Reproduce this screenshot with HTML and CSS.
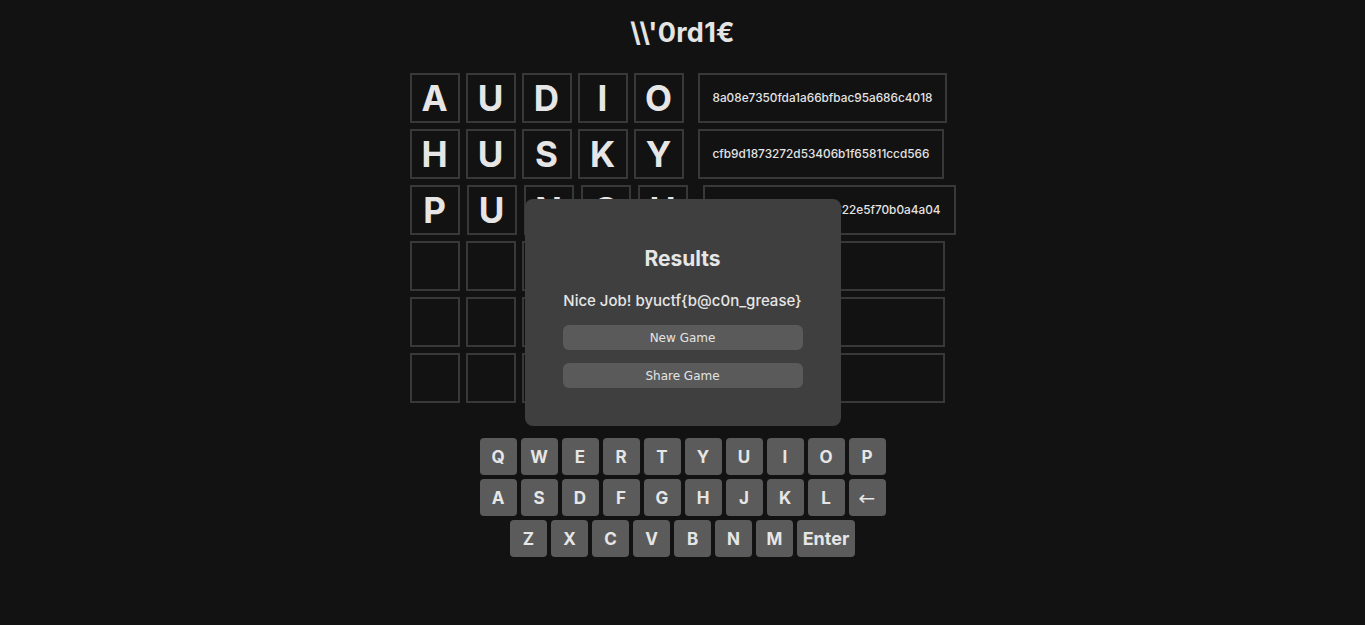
FILE: index.html
```html
<!DOCTYPE html>
<html lang="en">
<head>
<meta charset="utf-8">
<title>\\'0rd1€</title>
<link rel="stylesheet" href="styles.css">
</head>
<body>
<header class="header">
  <h1 class="title">\\'0rd1€</h1>
</header>
<main class="board-wrap">
  <div class="board">
    <div class="row">
      <div class="tile">A</div><div class="tile">U</div><div class="tile">D</div><div class="tile">I</div><div class="tile">O</div>
      <div class="hash">8a08e7350fda1a66bfbac95a686c4018</div>
    </div>
    <div class="row">
      <div class="tile">H</div><div class="tile">U</div><div class="tile">S</div><div class="tile">K</div><div class="tile">Y</div>
      <div class="hash">cfb9d1873272d53406b1f65811ccd566</div>
    </div>
    <div class="row row-wide">
      <div class="tile">P</div><div class="tile">U</div><div class="tile">N</div><div class="tile">C</div><div class="tile">H</div>
      <div class="hash">9d4c1e0b7a3f5e8d6622e5f70b0a4a04</div>
    </div>
    <div class="row">
      <div class="tile"></div><div class="tile"></div><div class="tile"></div><div class="tile"></div><div class="tile"></div>
      <div class="hash hash-empty"></div>
    </div>
    <div class="row">
      <div class="tile"></div><div class="tile"></div><div class="tile"></div><div class="tile"></div><div class="tile"></div>
      <div class="hash hash-empty"></div>
    </div>
    <div class="row">
      <div class="tile"></div><div class="tile"></div><div class="tile"></div><div class="tile"></div><div class="tile"></div>
      <div class="hash hash-empty"></div>
    </div>
  </div>
</main>
<section class="keyboard">
  <div class="krow">
    <button class="key">Q</button><button class="key">W</button><button class="key">E</button><button class="key">R</button><button class="key">T</button><button class="key">Y</button><button class="key">U</button><button class="key">I</button><button class="key">O</button><button class="key">P</button>
  </div>
  <div class="krow">
    <button class="key">A</button><button class="key">S</button><button class="key">D</button><button class="key">F</button><button class="key">G</button><button class="key">H</button><button class="key">J</button><button class="key">K</button><button class="key">L</button><button class="key key-back">&larr;</button>
  </div>
  <div class="krow">
    <button class="key">Z</button><button class="key">X</button><button class="key">C</button><button class="key">V</button><button class="key">B</button><button class="key">N</button><button class="key">M</button><button class="key key-enter">Enter</button>
  </div>
</section>
<div class="modal">
  <h2 class="modal-title">Results</h2>
  <p class="modal-msg">Nice Job! byuctf{b@c0n_grease}</p>
  <button class="modal-btn">New Game</button>
  <button class="modal-btn">Share Game</button>
</div>
</body>
</html>
```
FILE: styles.css
```css
html, body {
  margin: 0;
  padding: 0;
}
body {
  background: #121212;
  color: #e4e4e4;
  font-family: "Inter", "Noto Sans", sans-serif;
  min-height: 625px;
}
.header {
  display: flex;
  justify-content: center;
  padding-top: 17px;
}
.title {
  margin: 0;
  font-size: 27px;
  line-height: 32px;
  font-weight: 700;
  letter-spacing: 0.3px;
}
.board-wrap {
  display: flex;
  justify-content: center;
  padding-top: 24px;
}
.board {
  display: flex;
  flex-direction: column;
  gap: 6px;
  align-items: flex-start;
}
.row {
  display: flex;
  gap: 6px;
}
.row-wide {
  gap: 7px;
}
.tile {
  width: 50px;
  height: 50px;
  box-sizing: border-box;
  border: 2px solid #383838;
  display: flex;
  align-items: center;
  justify-content: center;
  font-size: 35px;
  font-weight: 700;
  color: #e6e6e6;
}
.hash {
  margin-left: 8px;
  height: 50px;
  box-sizing: border-box;
  border: 2px solid #383838;
  display: flex;
  align-items: center;
  padding: 0 13px;
  font-size: 11.8px;
  font-weight: 500;
  color: #e4e4e4;
}
.hash-empty {
  width: 247px;
}
.keyboard {
  display: flex;
  flex-direction: column;
  align-items: center;
  gap: 4px;
  margin-top: 35px;
}
.krow {
  display: flex;
  gap: 4px;
}
.key {
  width: 37px;
  height: 37px;
  padding: 0;
  border: none;
  border-radius: 4px;
  background: #5b5b5b;
  color: #e6e6e6;
  font-family: "Inter", "Noto Sans", sans-serif;
  font-size: 17px;
  font-weight: 700;
  display: flex;
  align-items: center;
  justify-content: center;
}
.key-back {
  font-family: "DejaVu Sans", sans-serif;
  font-weight: 400;
  font-size: 20px;
}
.key-enter {
  width: 58px;
  font-size: 18px;
}
.modal {
  position: absolute;
  top: 199px;
  left: 50%;
  transform: translateX(-50%);
  width: 316px;
  height: 227px;
  box-sizing: border-box;
  padding: 46px 38px 0;
  background: #3f3f3f;
  border-radius: 8px;
  display: flex;
  flex-direction: column;
  align-items: center;
}
.modal-title {
  margin: 0;
  font-size: 21px;
  line-height: 28px;
  font-weight: 700;
  color: #e6e6e6;
}
.modal-msg {
  margin: 18px 0 14px;
  font-size: 15px;
  line-height: 20px;
  font-weight: 500;
  color: #e6e6e6;
}
.modal-btn {
  width: 240px;
  height: 25px;
  border: none;
  border-radius: 6px;
  background: #5a5a5a;
  color: #e4e4e4;
  font-family: "DejaVu Sans", "Verdana", sans-serif;
  font-size: 12px;
  margin-bottom: 13px;
  padding: 0;
}
```
